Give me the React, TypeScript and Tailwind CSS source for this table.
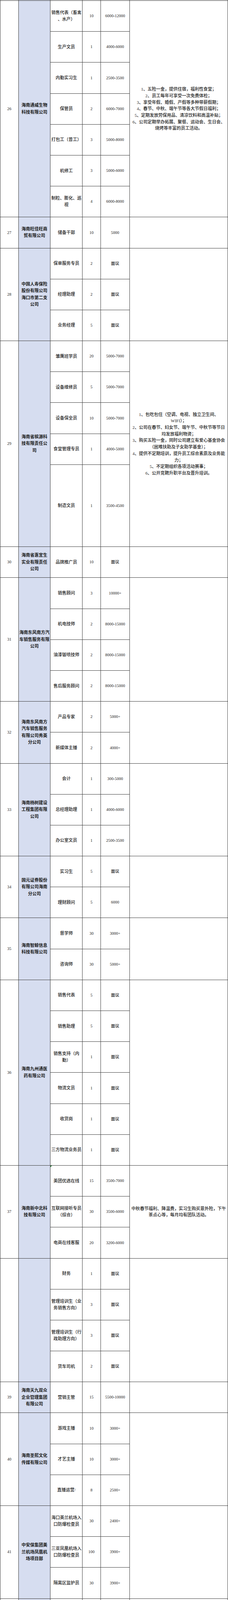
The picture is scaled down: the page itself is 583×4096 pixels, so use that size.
import React from 'react';

type Job = { t: string[]; n: string; s: string; tall?: boolean; mark?: boolean };
type Co = { no: string; name: string[]; jobs: Job[]; perks?: string[] };

const j = (t: string | string[], n: string, s: string, extra: Partial<Job> = {}): Job => ({
  t: Array.isArray(t) ? t : [t],
  n,
  s,
  ...extra,
});

const companies: Co[] = [
  {
    no: '26',
    name: ['海南通威生物', '科技有限公司'],
    jobs: [
      j(['销售代表（畜禽', '、水产）'], '10', '6000-12000'),
      j('生产文员', '1', '4000-6000'),
      j('内勤实习生', '1', '2500-3500'),
      j('保管员', '2', '6000-7000'),
      j('打包工（普工）', '3', '5000-8000'),
      j('机修工', '3', '5000-6000'),
      j(['制粒、膨化、巡', '视'], '4', '6000-8000'),
    ],
    perks: [
      '1、五险一金，提供住宿，福利性食堂；',
      '2、员工每年可享受一次免费体检；',
      '3、享受年假、婚假、产假等多种带薪假期；',
      '4、春节、中秋、端午节等各大节假日福利；',
      '5、定期发放劳保用品、清凉饮料和高温补贴；',
      '6、公司定期举办拓展、聚餐、运动会、生日会、',
      '烧烤等丰富的员工活动。',
    ],
  },
  { no: '27', name: ['海南旺佳旺商', '贸有限公司'], jobs: [j('储备干部', '10', '5000')] },
  {
    no: '28',
    name: ['中国人寿保险', '股份有限公司', '海口市第二支', '公司'],
    jobs: [j('保单服务专员', '2', '面议'), j('经理助理', '2', '面议'), j('业务经理', '5', '面议')],
  },
  {
    no: '29',
    name: ['海南省槟源科', '技有限责任公', '司'],
    jobs: [
      j('雏鹰班学员', '20', '5000-7000'),
      j('设备维修员', '5', '5000-7000'),
      j('设备保全员', '10', '5000-7000'),
      j('食堂管理专员', '1', '4000-5000'),
      j('制造文员', '1', '3500-4500', { tall: true }),
    ],
    perks: [
      '1、包吃包住（空调、电视、独立卫生间、',
      'WIFI）；',
      '2、公司在春节、妇女节、端午节、中秋节等节日',
      '均发放福利物资；',
      '3、购买五险一金，同时公司建立有爱心基金协会',
      '（困难扶助及子女助学基金）；',
      '4、提供不定期培训，提升员工综合素质及业务能',
      '力；',
      '5、不定期组织各项活动赛事；',
      '6、公开竞聘升职平台及晋升培训。',
    ],
  },
  { no: '30', name: ['海南省惠宜生', '实业有限责任', '公司'], jobs: [j('品牌推广员', '10', '面议')] },
  {
    no: '31',
    name: ['海南东风南方汽', '车销售服务有限', '公司'],
    jobs: [
      j('销售顾问', '3', '10000+'),
      j('机电技师', '2', '8000-15000'),
      j('油漆钣喷技师', '2', '8000-15000'),
      j('售后服务顾问', '2', '8000-15000'),
    ],
  },
  {
    no: '32',
    name: ['海南东风南方', '汽车销售服务', '有限公司秀英', '分公司'],
    jobs: [j('产品专家', '2', '5000+'), j('新媒体主播', '2', '4000+')],
  },
  {
    no: '33',
    name: ['海南杨树建设', '工程集团有限', '公司'],
    jobs: [j('会计', '1', '300-5000'), j('总经理助理', '1', '4000-6000'), j('办公室文员', '1', '2500-3500')],
  },
  {
    no: '34',
    name: ['国元证券股份', '有限公司海南', '分公司'],
    jobs: [j('实习生', '5', '面议'), j('理财顾问', '5', '6000')],
  },
  {
    no: '35',
    name: ['海南智鲸信息', '科技有限公司'],
    jobs: [j('督学师', '30', '3000+'), j('咨询师', '30', '5000+')],
  },
  {
    no: '36',
    name: ['海南九州通医', '药有限公司'],
    jobs: [
      j('销售代表', '5', '面议'),
      j('销售助理', '5', '面议'),
      j(['销售支持（内', '勤）'], '1', '面议'),
      j('物流文员', '1', '面议'),
      j('收货岗', '1', '面议'),
      j('三方物流业务员', '1', '面议'),
    ],
  },
  {
    no: '37',
    name: ['海南新中北科', '技有限公司'],
    jobs: [
      j('美团优选在线', '15', '3500-7000', { mark: true }),
      j(['互联网接听专员', '（综合）'], '30', '3500-6000'),
      j('电商在线客服', '20', '3200-6000'),
    ],
    perks: ['中秋春节福利、降温费，实习生购买意外险，下午', '茶点心等，每月均有团队活动。'],
  },
  {
    no: '',
    name: [],
    jobs: [
      j('财务', '1', '面议'),
      j(['管理培训生（业', '务销售方向）'], '3', '面议'),
      j(['管理培训生（行', '政助理方向）'], '3', '面议'),
      j('货车司机', '2', '面议'),
    ],
  },
  { no: '39', name: ['海南天九双众', '企业管理集团', '有限公司'], jobs: [j('营销主管', '15', '5500-10000')] },
  {
    no: '40',
    name: ['海南圣熙文化', '传媒有限公司'],
    jobs: [j('游戏主播', '10', '3000+'), j('才艺主播', '10', '3000+'), j('直播运营/', '8', '2500+')],
  },
  {
    no: '41',
    name: ['中安保集团美', '兰机场凤凰机', '场项目部'],
    jobs: [
      j(['海口美兰机场入', '口防爆检查员'], '30', '2400+'),
      j(['三亚凤凰机场入', '口防爆检查员'], '100', '3900+'),
      j('隔离区监护员', '30', '3900+'),
    ],
  },
];

const cell = 'border-r border-b border-[#3a3a3a]';

function Stub({ h }: { h: string }) {
  return (
    <div className={`flex ${h}`}>
      <div className="w-[46.5px] shrink-0 border-r border-[#3a3a3a]" />
      <div className="w-[81.8px] shrink-0 border-r border-[#3a3a3a] bg-[#d6ddf0]" />
      <div className="w-[81.9px] shrink-0 border-r border-[#3a3a3a]" />
      <div className="w-[46.4px] shrink-0 border-r border-[#3a3a3a]" />
      <div className="w-[74.4px] shrink-0 border-r border-[#3a3a3a]" />
      <div className="flex-1 border-r border-[#3a3a3a]" />
    </div>
  );
}

function Block({ co }: { co: Co }) {
  return (
    <div className="flex">
      <div className={`w-[46.5px] shrink-0 ${cell} flex items-center justify-center text-[10.5px]`}>{co.no}</div>
      <div
        className={`w-[81.8px] shrink-0 ${cell} bg-[#d6ddf0] flex flex-col items-center justify-center text-[11px] leading-[17.5px] font-bold text-[#1a1a1a]`}
      >
        {co.name.map((l) => (
          <span key={l} className="whitespace-nowrap">
            {l}
          </span>
        ))}
      </div>
      <div className="w-[202.7px] shrink-0 flex flex-col">
        {co.jobs.map((job, i) => (
          <div key={i} className={`flex ${job.tall ? 'h-[210.4px]' : 'h-[79.2px]'}`}>
            <div
              className={`relative w-[81.9px] shrink-0 ${cell} flex flex-col items-center justify-center text-[11px] leading-[17px] font-medium`}
            >
              {job.mark && (
                <span className="absolute left-0 top-0 w-0 h-0 border-t-[4px] border-t-[#1f7a2e] border-r-[4px] border-r-transparent" />
              )}
              {job.t.map((l) => (
                <span key={l} className="whitespace-nowrap">
                  {l}
                </span>
              ))}
            </div>
            <div className={`w-[46.4px] shrink-0 ${cell} flex items-center justify-center text-[10.5px]`}>{job.n}</div>
            <div className={`flex-1 ${cell} flex items-center justify-center text-[10.5px] font-medium`}>{job.s}</div>
          </div>
        ))}
      </div>
      <div className={`flex-1 ${cell} flex flex-col items-center justify-center text-[11px] leading-[16.7px] font-medium`}>
        {co.perks?.map((l) => (
          <span key={l} className="whitespace-nowrap">
            {l}
          </span>
        ))}
      </div>
    </div>
  );
}

export default function App() {
  return (
    <div className="w-[583px] bg-white text-[#222] font-['Liberation_Serif','Noto_Sans_CJK_SC',serif]">
      <div className="border-l border-[#3a3a3a]">
        <div className="border-b border-[#3a3a3a]">
          <Stub h="h-[1px]" />
        </div>
        {companies.map((co, i) => (
          <Block key={i} co={co} />
        ))}
        <Stub h="h-[3px]" />
      </div>
    </div>
  );
}
